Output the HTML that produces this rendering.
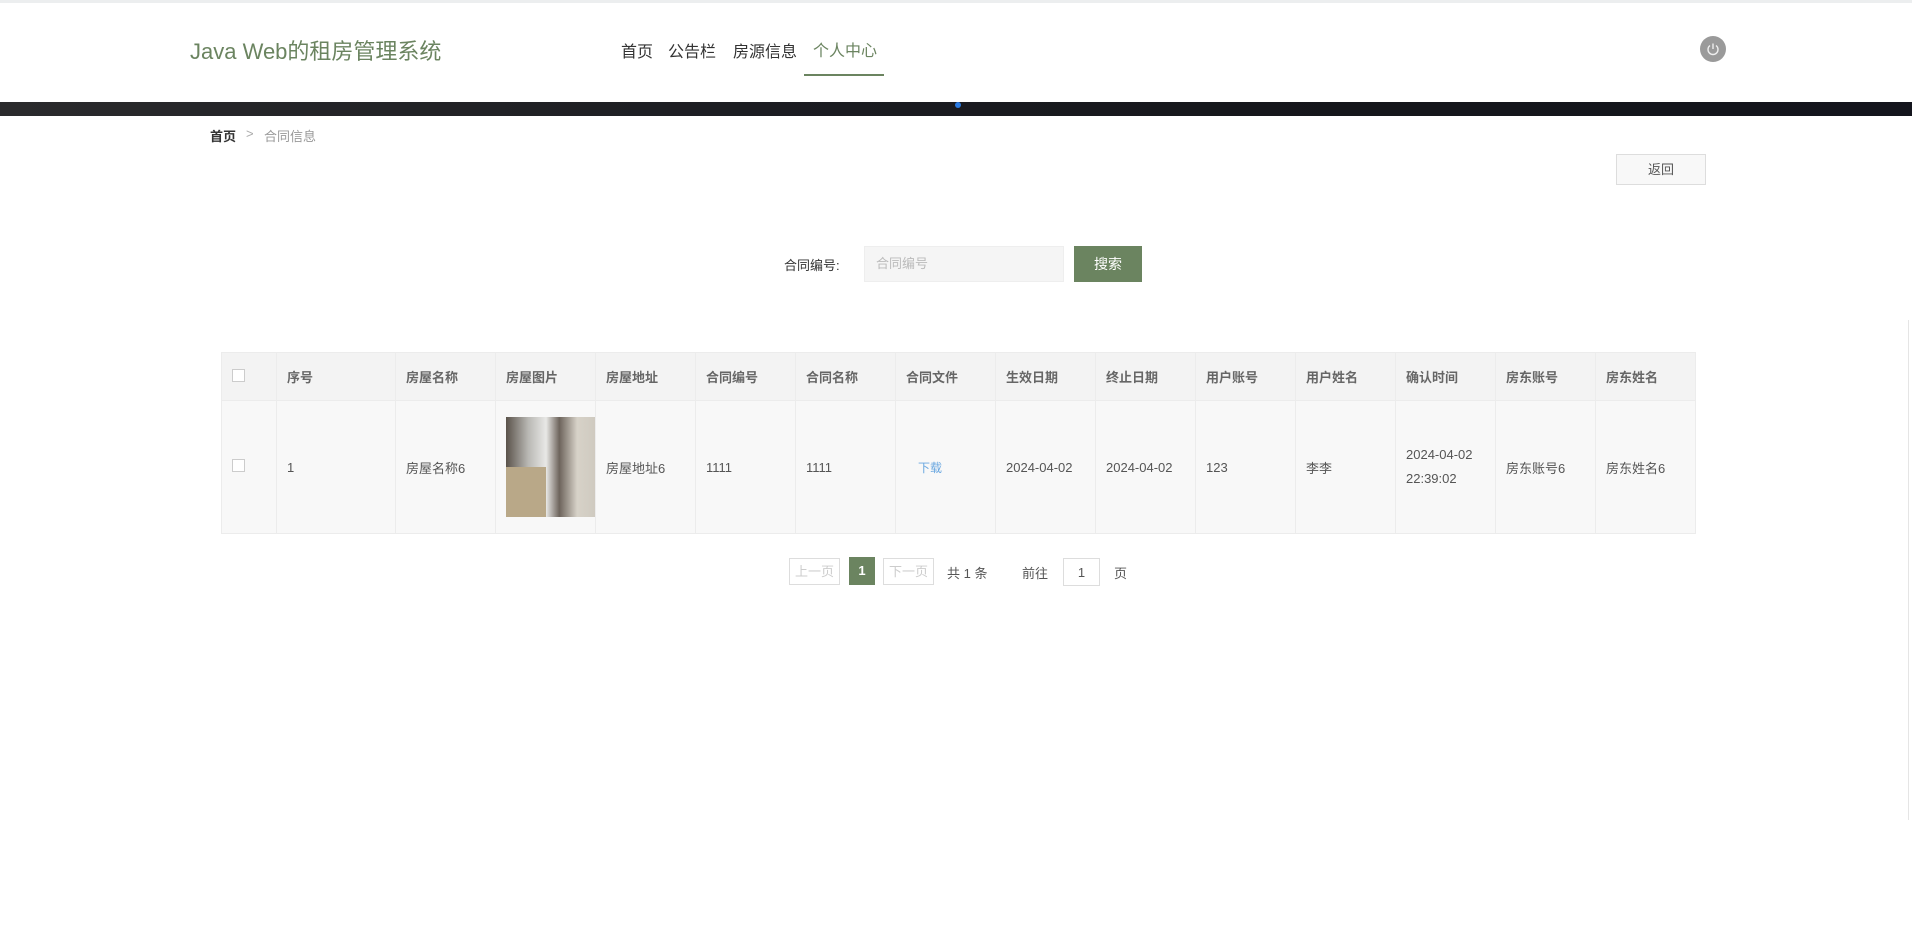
<!DOCTYPE html>
<html><head><meta charset="utf-8"><style>
*{margin:0;padding:0;box-sizing:border-box}
body{width:1912px;height:932px;background:#fff;font-family:"Liberation Sans","Noto Sans CJK SC",sans-serif;position:relative;overflow:hidden;color:#333}
.a{position:absolute;white-space:nowrap}
table{position:absolute;left:221px;top:352px;border-collapse:collapse;font-size:13px;color:#555;table-layout:fixed;width:1474px}
td{border:1px solid #ececec;background:#f8f8f8;padding:0 10px;text-align:left;vertical-align:middle;overflow:hidden;white-space:nowrap}
tr.h td{height:48px;background:#f3f3f3;font-weight:bold;color:#666}
tr.b td{height:133px}
.cb{width:13px;height:13px;border:1px solid #ccc;background:#fff;display:inline-block}
</style></head><body>
<div class="a" style="left:0;top:0;width:1912px;height:3px;background:#eceeef"></div>
<div class="a" style="left:190px;top:34px;font-size:22px;color:#6b8460">Java Web的租房管理系统</div>
<div class="a" style="left:621px;top:38px;font-size:16px;color:#333">首页</div>
<div class="a" style="left:668px;top:38px;font-size:16px;color:#333">公告栏</div>
<div class="a" style="left:733px;top:38px;font-size:16px;color:#333">房源信息</div>
<div class="a" style="left:813px;top:37px;font-size:16px;color:#6b8460">个人中心</div>
<div class="a" style="left:804px;top:74px;width:80px;height:2px;background:#6b8460"></div>
<div class="a" style="left:1700px;top:36px;width:26px;height:26px;border-radius:50%;background:#9a9a9a"></div>
<svg class="a" style="left:1704px;top:40px" width="18" height="18" viewBox="0 0 18 18"><path d="M6 5.5A5 5 0 1 0 12 5.5" fill="none" stroke="#eee" stroke-width="1.4"/><path d="M9 3.5V9" stroke="#eee" stroke-width="1.4"/></svg>
<div class="a" style="left:0;top:102px;width:1912px;height:14px;background:linear-gradient(90deg,#2a2a2c,#1c1d22 40%,#15161b 70%,#14151d)"></div>
<div class="a" style="left:955px;top:102px;width:6px;height:6px;border-radius:50%;background:#2a7ae2"></div>
<div class="a" style="left:210px;top:126px;font-size:13px;color:#333;font-weight:bold">首页</div>
<div class="a" style="left:246px;top:126px;font-size:13px;color:#aaa">&gt;</div>
<div class="a" style="left:264px;top:126px;font-size:13px;color:#999">合同信息</div>
<div class="a" style="left:1616px;top:154px;width:90px;height:31px;border:1px solid #ddd;background:#f8f8f8;font-size:13px;color:#555;text-align:center;line-height:29px">返回</div>
<div class="a" style="left:784px;top:255px;font-size:13px;color:#333">合同编号:</div>
<div class="a" style="left:864px;top:246px;width:200px;height:36px;background:#f5f5f5;border:1px solid #eee;font-size:13px;color:#bbb;line-height:34px;padding-left:11px">合同编号</div>
<div class="a" style="left:1074px;top:246px;width:68px;height:36px;background:#6b8460;color:#fff;font-size:14px;text-align:center;line-height:36px">搜索</div>
<table>
<colgroup><col style="width:55px"><col style="width:119px"><col style="width:100px"><col style="width:100px"><col style="width:100px"><col style="width:100px"><col style="width:100px"><col style="width:100px"><col style="width:100px"><col style="width:100px"><col style="width:100px"><col style="width:100px"><col style="width:100px"><col style="width:100px"><col style="width:100px"></colgroup>
<tr class="h"><td><span class="cb"></span></td><td>序号</td><td>房屋名称</td><td>房屋图片</td><td>房屋地址</td><td>合同编号</td><td>合同名称</td><td>合同文件</td><td>生效日期</td><td>终止日期</td><td>用户账号</td><td>用户姓名</td><td>确认时间</td><td>房东账号</td><td>房东姓名</td></tr>
<tr class="b"><td><span class="cb"></span></td><td>1</td><td>房屋名称6</td><td style="padding:0 0 0 10px"><div style="width:89px;height:100px;background:linear-gradient(90deg,#5a524a 0%,#b9b8b4 25%,#e8e8e6 45%,#6d645c 60%,#d7d2c8 80%,#cfcac0 100%)"><div style="position:relative;top:50px;width:40px;height:50px;background:#b9a888"></div></div></td><td>房屋地址6</td><td>1111</td><td>1111</td><td style="color:#6aa7e0;font-size:12px;padding-left:22px">下载</td><td>2024-04-02</td><td>2024-04-02</td><td>123</td><td>李李</td><td style="line-height:24px">2024-04-02<br>22:39:02</td><td>房东账号6</td><td>房东姓名6</td></tr>
</table>
<div class="a" style="left:789px;top:558px;width:51px;height:27px;border:1px solid #ddd;color:#ccc;font-size:13px;text-align:center;line-height:25px">上一页</div>
<div class="a" style="left:849px;top:557px;width:26px;height:28px;background:#6b8460;color:#fff;font-size:13px;font-weight:bold;text-align:center;line-height:28px">1</div>
<div class="a" style="left:883px;top:558px;width:51px;height:27px;border:1px solid #ddd;color:#ccc;font-size:13px;text-align:center;line-height:25px">下一页</div>
<div class="a" style="left:947px;top:563px;font-size:13px;color:#555">共 1 条</div>
<div class="a" style="left:1022px;top:563px;font-size:13px;color:#555">前往</div>
<div class="a" style="left:1063px;top:558px;width:37px;height:28px;border:1px solid #ddd;font-size:13px;color:#555;text-align:center;line-height:28px">1</div>
<div class="a" style="left:1114px;top:563px;font-size:13px;color:#555">页</div>
<div class="a" style="left:1908px;top:320px;width:1px;height:500px;background:#e5e5e5"></div>
</body></html>
